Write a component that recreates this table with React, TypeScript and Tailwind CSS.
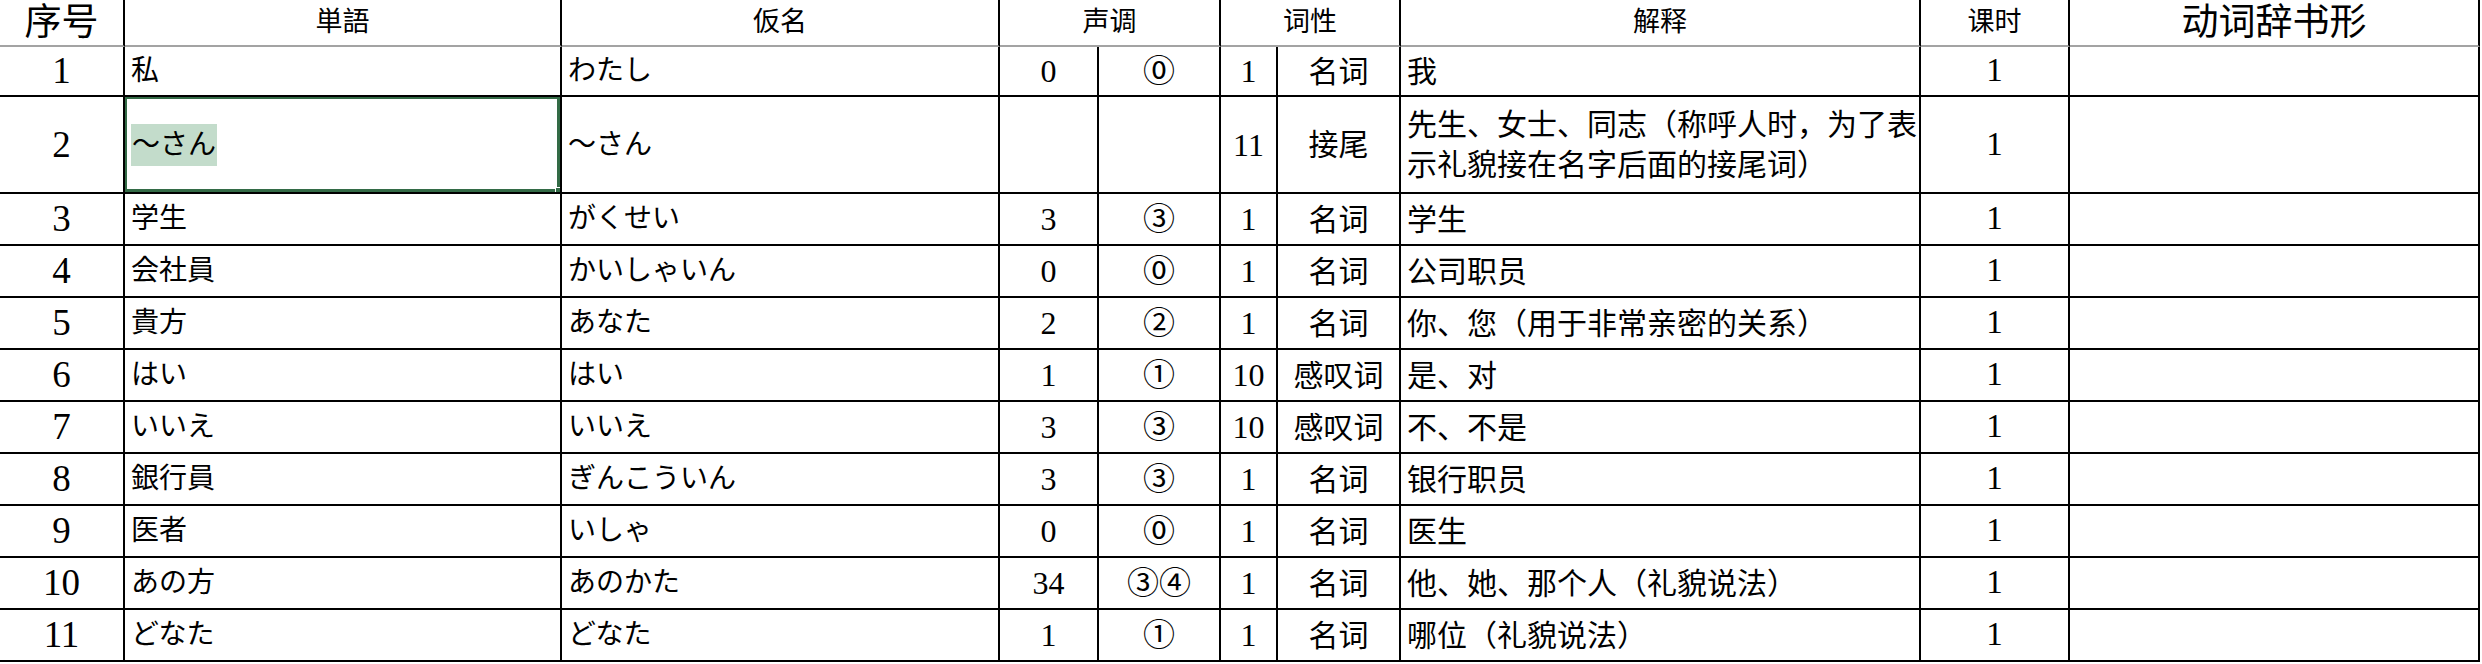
const cols =
  'grid grid-cols-[125px_437px_438px_99px_122px_57px_123px_520px_149px_410px]'

const serif = "font-['Liberation_Serif','Noto_Sans_CJK_SC',serif]"
const jp = "font-['Liberation_Serif','Noto_Sans_CJK_JP',serif]"

type Row = {
  no: number
  word: string
  kana: string
  tone: string
  mark: string
  pos: string
  posName: string
  meaning: string
}

const rows: Row[] = [
  { no: 1, word: '私', kana: 'わたし', tone: '0', mark: '⓪', pos: '1', posName: '名词', meaning: '我' },
  { no: 2, word: '～さん', kana: '～さん', tone: '', mark: '', pos: '11', posName: '接尾', meaning: '' },
  { no: 3, word: '学生', kana: 'がくせい', tone: '3', mark: '③', pos: '1', posName: '名词', meaning: '学生' },
  { no: 4, word: '会社員', kana: 'かいしゃいん', tone: '0', mark: '⓪', pos: '1', posName: '名词', meaning: '公司职员' },
  { no: 5, word: '貴方', kana: 'あなた', tone: '2', mark: '②', pos: '1', posName: '名词', meaning: '你、您（用于非常亲密的关系）' },
  { no: 6, word: 'はい', kana: 'はい', tone: '1', mark: '①', pos: '10', posName: '感叹词', meaning: '是、对' },
  { no: 7, word: 'いいえ', kana: 'いいえ', tone: '3', mark: '③', pos: '10', posName: '感叹词', meaning: '不、不是' },
  { no: 8, word: '銀行員', kana: 'ぎんこういん', tone: '3', mark: '③', pos: '1', posName: '名词', meaning: '银行职员' },
  { no: 9, word: '医者', kana: 'いしゃ', tone: '0', mark: '⓪', pos: '1', posName: '名词', meaning: '医生' },
  { no: 10, word: 'あの方', kana: 'あのかた', tone: '34', mark: '③④', pos: '1', posName: '名词', meaning: '他、她、那个人（礼貌说法）' },
  { no: 11, word: 'どなた', kana: 'どなた', tone: '1', mark: '①', pos: '1', posName: '名词', meaning: '哪位（礼貌说法）' },
]

const cell = 'border-r-2 border-b-2 border-black flex items-center overflow-hidden'

function Header() {
  const h = 'h-[47px] border-r-2 border-b-2 border-r-black border-b-[#a3a3a3] flex items-center justify-center'
  return (
    <div className={`${cols} ${serif}`}>
      <div className={`${h} text-[37px]`}>序号</div>
      <div className={`${h} text-[27px]`}>単語</div>
      <div className={`${h} text-[27px]`}>仮名</div>
      <div className={`${h} col-span-2 text-[27px]`}>声调</div>
      <div className={`${h} col-span-2 text-[27px]`}>词性</div>
      <div className={`${h} text-[27px]`}>解释</div>
      <div className={`${h} text-[27px]`}>课时</div>
      <div className={`${h} text-[37px]`}>动词辞书形</div>
    </div>
  )
}

function DataRow({ r }: { r: Row }) {
  const tall = r.no === 2
  const h = tall ? 'h-[97px]' : r.no === 1 ? 'h-[50px]' : 'h-[52px]'
  return (
    <div className={`${cols} ${serif} text-black`}>
      <div className={`${cell} ${h} justify-center text-[37px]`}>{r.no}</div>
      <div className={`${cell} ${h} relative pl-[6px] text-[28px] ${jp}`}>
        {tall ? (
          <>
            <span className="bg-[#c3dccb] px-[1px] leading-[42px]">{r.word}</span>
            <div className="absolute -left-[2px] -top-[2px] -right-[1px] -bottom-[1px] border-4 border-[#336b46]" />
            <div className="absolute -right-[4px] -bottom-[4px] w-[9px] h-[9px] bg-[#336b46] border border-white" />
          </>
        ) : (
          r.word
        )}
      </div>
      <div className={`${cell} ${h} pl-[6px] text-[28px] ${jp}`}>{r.kana}</div>
      <div className={`${cell} ${h} justify-center text-[32px]`}>{r.tone}</div>
      <div className={`${cell} ${h} justify-center text-[32px]`}>{r.mark}</div>
      <div className={`${cell} ${h} justify-center text-[32px]`}>{r.pos}</div>
      <div className={`${cell} ${h} justify-center text-[30px]`}>{r.posName}</div>
      <div className={`${cell} ${h} pl-[6px] text-[30px]`}>
        {tall ? (
          <div className="leading-[40px] whitespace-nowrap">
            先生、女士、同志（称呼人时，为了表
            <br />
            示礼貌接在名字后面的接尾词）
          </div>
        ) : (
          r.meaning
        )}
      </div>
      <div className={`${cell} ${h} justify-center text-[33px]`}>1</div>
      <div className={`${cell} ${h}`} />
    </div>
  )
}

export default function App() {
  return (
    <div className="w-[2482px] h-[664px] bg-white overflow-hidden">
      <Header />
      {rows.map((r) => (
        <DataRow key={r.no} r={r} />
      ))}
    </div>
  )
}
